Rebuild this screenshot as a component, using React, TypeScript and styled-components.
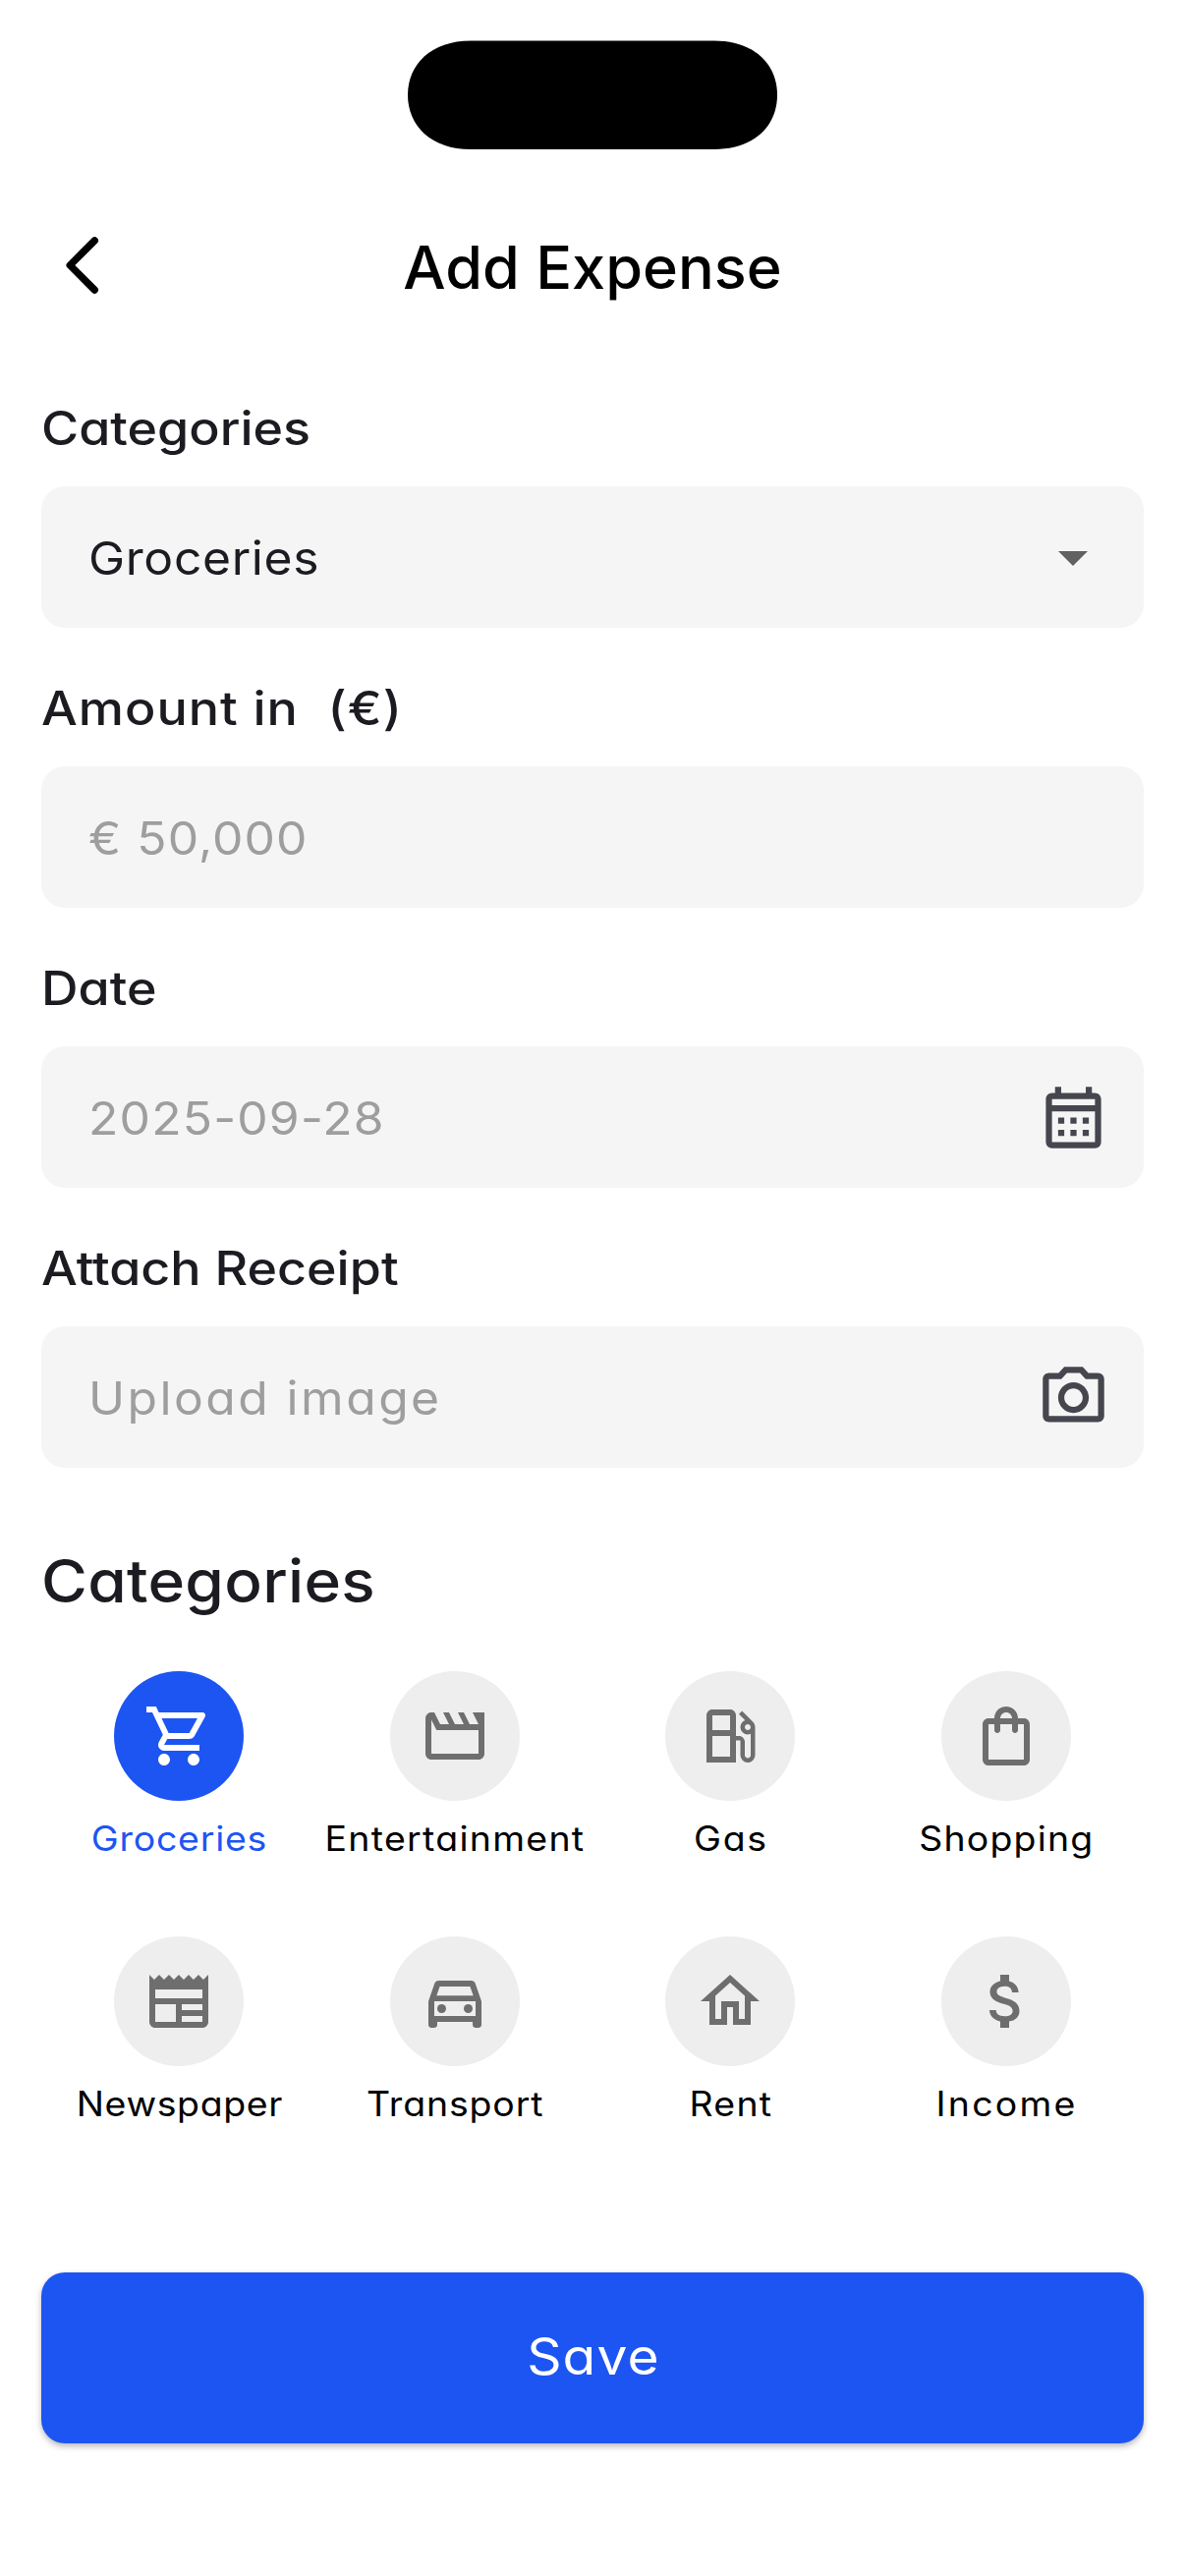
import React from "react";
import styled, { createGlobalStyle } from "styled-components";
import {
  MdArrowDropDown,
  MdAttachMoney,
  MdOutlineCalendarMonth,
  MdOutlineCameraAlt,
  MdOutlineDirectionsCar,
  MdOutlineHome,
  MdOutlineLocalGasStation,
  MdOutlineNewspaper,
  MdOutlineShoppingBag,
  MdOutlineShoppingCart,
} from "react-icons/md";

// cv11 switches Inter to the single-storey "a"
const Global = createGlobalStyle`
  * { box-sizing: border-box; }
  body {
    margin: 0;
    background: #ffffff;
    font-family: Inter, "Open Sans", sans-serif;
    font-feature-settings: "cv11" 1;
  }
  button { font-family: inherit; font-feature-settings: inherit; }
`;

const Page = styled.div`
  width: 1206px;
  height: 2622px;
  display: flex;
  flex-direction: column;
  overflow: hidden;
`;

const StatusBar = styled.div`
  height: 186px;
  padding-top: 41px;
  display: flex;
  justify-content: center;
  align-items: flex-start;
`;

const Header = styled.header`
  height: 168px;
  display: grid;
  grid-template-columns: 126px 1fr 126px;
  align-items: center;
  padding: 0 42px;
`;

const Back = styled.button`
  border: 0;
  background: none;
  padding: 0 0 0 20px;
  display: flex;
`;

const Title = styled.h1`
  margin: 4px 0 0;
  text-align: center;
  font-size: 60px;
  line-height: 84px;
  font-weight: 500;
  color: #000;
  transform: scaleX(1.02);
`;

const Form = styled.form`
  padding: 46px 42px 0;
  display: flex;
  flex-direction: column;
  gap: 46px;
`;

const Group = styled.div`
  display: flex;
  flex-direction: column;
  gap: 23px;
`;

const Label = styled.label<{ $tracking?: number }>`
  align-self: flex-start;
  font-size: 47.5px;
  line-height: 72px;
  font-weight: 500;
  color: #1b1b21;
  white-space: pre;
  letter-spacing: ${(p) => p.$tracking ?? 0}px;
  transform: scaleX(1.095);
  transform-origin: left;
`;

const Field = styled.div`
  height: 144px;
  border-radius: 24px;
  background: #f5f5f5;
  color: #46464f;
  display: flex;
  align-items: center;
  justify-content: space-between;
  padding: 0 34.5px 0 48px;

  svg { flex: none; }
`;

const Value = styled.span<{ $hint?: boolean; $tracking: number }>`
  font-size: 47px;
  line-height: 72px;
  padding-top: 1px;
  color: ${(p) => (p.$hint ? "#9e9e9e" : "#1b1b21")};
  letter-spacing: ${(p) => p.$tracking}px;
  transform: scaleX(1.06);
  transform-origin: left;
`;

const Arrow = styled(MdArrowDropDown)`
  margin-right: 1.5px;
  color: #616161;
`;

const Heading = styled.h2`
  align-self: flex-start;
  margin: 70px 42px 47px;
  font-size: 60px;
  line-height: 90px;
  font-weight: 500;
  color: #1b1b21;
  letter-spacing: 0.3px;
  transform: scaleX(1.065);
  transform-origin: left;
`;

const Grid = styled.div`
  padding: 0 42px;
  display: grid;
  grid-template-columns: repeat(4, 1fr);
  row-gap: 73px;
`;

const Cell = styled.div<{ $active: boolean }>`
  display: flex;
  flex-direction: column;
  align-items: center;
  gap: 11px;
  color: ${(p) => (p.$active ? "#1d55f3" : "#000")};
`;

const Circle = styled.div<{ $active: boolean }>`
  width: 132px;
  height: 132px;
  border-radius: 50%;
  display: flex;
  align-items: center;
  justify-content: center;
  background: ${(p) => (p.$active ? "#1d55f3" : "#eeeeee")};
  color: ${(p) => (p.$active ? "#fff" : "#6e6e6e")};
`;

const Name = styled.span<{ $tracking: number }>`
  font-size: 35px;
  line-height: 54px;
  white-space: nowrap;
  letter-spacing: ${(p) => p.$tracking}px;
  padding-left: ${(p) => p.$tracking}px;
  transform: scaleX(1.07);
`;

const Save = styled.button`
  margin: 145px 42px 0;
  height: 174px;
  padding: 0 0 3px;
  border: 0;
  border-radius: 24px;
  background: #1d55f3;
  color: #fff;
  font-size: 52px;
  box-shadow: 0 3px 6px rgba(0, 0, 0, 0.28);
`;

const SaveText = styled.span`
  display: inline-block;
  padding-left: 1px;
  letter-spacing: 1px;
  transform: scaleX(1.06);
`;

type IconProps = { size: number };

const Movie = ({ size }: IconProps) => (
  <svg width={size} height={size} viewBox="0 0 24 24" fill="currentColor">
    <path d="M4 6.47 5.76 10H20v8H4V6.47M22 4h-4l2 4h-3l-2-4h-2l2 4h-3l-2-4H8l2 4H7L5 4H4c-1.1 0-1.99.9-1.99 2L2 18c0 1.1.9 2 2 2h16c1.1 0 2-.9 2-2V4z" />
  </svg>
);

const Island = () => (
  <svg width="376" height="111" viewBox="0 0 376 111">
    <path d="M64 .5H312C352 .5 376 24 376 55.7S352 111 312 111H64C24 111 0 87 0 55.700S24 .5 64 .5Z" />
  </svg>
);

const Chevron = () => (
  <svg width="44" height="64" viewBox="0 0 44 64" fill="none" stroke="#000" strokeWidth="7.4" strokeLinecap="round" strokeLinejoin="round">
    <path d="M34.300 6.900 9.200 32l25.100 25.100" />
  </svg>
);

const categories: { name: string; icon: React.ComponentType<IconProps>; tracking: number }[] = [
  { name: "Groceries", icon: MdOutlineShoppingCart, tracking: 0.7 },
  { name: "Entertainment", icon: Movie, tracking: 1.2 },
  { name: "Gas", icon: MdOutlineLocalGasStation, tracking: 1.5 },
  { name: "Shopping", icon: MdOutlineShoppingBag, tracking: 1.1 },
  { name: "Newspaper", icon: MdOutlineNewspaper, tracking: 0.6 },
  { name: "Transport", icon: MdOutlineDirectionsCar, tracking: 0.8 },
  { name: "Rent", icon: MdOutlineHome, tracking: 1.2 },
  { name: "Income", icon: MdAttachMoney, tracking: 2.1 },
];

export default function App() {
  const selected = "Groceries";
  return (
    <Page>
      <Global />
      <StatusBar><Island /></StatusBar>
      <Header>
        <Back type="button" aria-label="Back"><Chevron /></Back>
        <Title>Add Expense</Title>
      </Header>
      <Form>
        <Group>
          <Label>Categories</Label>
          <Field><Value $tracking={0.6}>Groceries</Value><Arrow size={72} /></Field>
        </Group>
        <Group>
          <Label $tracking={0.9}>{"Amount in  (€)"}</Label>
          <Field><Value $hint $tracking={1}>€ 50,000</Value></Field>
        </Group>
        <Group>
          <Label>Date</Label>
          <Field><Value $hint $tracking={1.1}>2025-09-28</Value><MdOutlineCalendarMonth size={75} /></Field>
        </Group>
        <Group>
          <Label>Attach Receipt</Label>
          <Field><Value $hint $tracking={2.3}>Upload image</Value><MdOutlineCameraAlt size={75} /></Field>
        </Group>
      </Form>
      <Heading>Categories</Heading>
      <Grid>
        {categories.map(({ name, icon: Icon, tracking }) => (
          <Cell key={name} $active={name === selected}>
            <Circle $active={name === selected}><Icon size={72} /></Circle>
            <Name $tracking={tracking}>{name}</Name>
          </Cell>
        ))}
      </Grid>
      <Save type="button"><SaveText>Save</SaveText></Save>
    </Page>
  );
}
